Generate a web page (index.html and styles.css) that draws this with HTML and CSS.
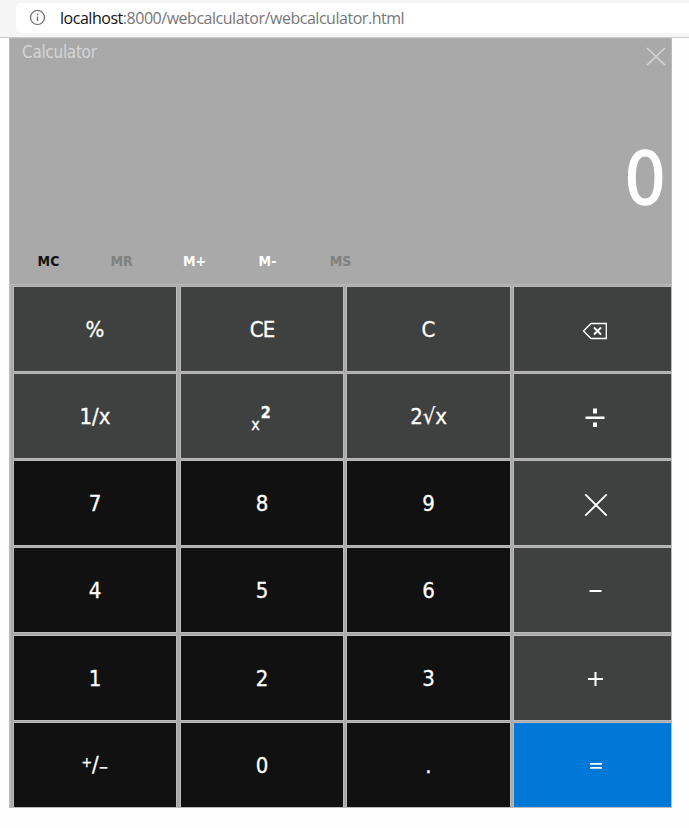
FILE: index.html
```html
<!DOCTYPE html>
<html lang="en">
<head>
<meta charset="utf-8">
<title>Calculator</title>
<link rel="stylesheet" href="styles.css">
</head>
<body>
<header class="browser-bar">
  <div class="address">
    <svg class="info" width="16" height="16" viewBox="0 0 16 16"><circle cx="8.5" cy="7.5" r="7" fill="none" stroke="#6d6871" stroke-width="1.2"/><path d="M8.5 6.5v4.5M8.5 3.8v1.4" fill="none" stroke="#6d6871" stroke-width="1.3"/></svg>
    <span class="url"><span class="host">localhost</span>:8000/webcalculator/webcalculator.html</span>
  </div>
</header>
<main class="calculator">
  <section class="top">
    <div class="title-row">
      <span class="title">Calculator</span>
      <svg class="close" width="20" height="19" viewBox="0 0 20 19"><path d="M1 1L19 18M19 1L1 18" fill="none" stroke="#d5d5d5" stroke-width="1.6"/></svg>
    </div>
    <div class="display">0</div>
    <div class="memory">
      <span class="active">MC</span><span class="off">MR</span><span>M+</span><span>M-</span><span class="off">MS</span>
    </div>
  </section>
  <section class="keys">
    <div class="key fn"><span>%</span></div>
    <div class="key fn"><span class="tight">CE</span></div>
    <div class="key fn"><span>C</span></div>
    <div class="key fn"><svg class="back" width="26" height="18" viewBox="0 0 26 18"><path d="M9 1.5H24.3V16.5H9L1.5 9Z" fill="none" stroke="#fff" stroke-width="1.3"/><path d="M12 5.5L19 12.5M19 5.5L12 12.5" fill="none" stroke="#fff" stroke-width="1.8"/></svg></div>
    <div class="key fn"><span>1/x</span></div>
    <div class="key fn"><span class="square"><span class="base">x</span><b class="power">2</b></span></div>
    <div class="key fn"><span class="root">2√x</span></div>
    <div class="key fn"><svg class="divide" width="20" height="20" viewBox="0 0 20 20"><path d="M.5 8.5H19.5V11H.5ZM8 .5H12V5.5H8ZM8 14.5H12V19H8Z" fill="#fff"/></svg></div>
    <div class="key"><span>7</span></div>
    <div class="key"><span>8</span></div>
    <div class="key"><span>9</span></div>
    <div class="key fn"><svg class="times" width="24" height="24" viewBox="0 0 24 24"><path d="M1.3 1.3L22.7 22.7M22.7 1.3L1.3 22.7" fill="none" stroke="#fff" stroke-width="1.9"/></svg></div>
    <div class="key"><span>4</span></div>
    <div class="key"><span>5</span></div>
    <div class="key"><span>6</span></div>
    <div class="key fn"><svg class="minus" width="13" height="2" viewBox="0 0 13 2"><path d="M.5 0H12.5V2H.5Z" fill="#fff"/></svg></div>
    <div class="key"><span>1</span></div>
    <div class="key"><span>2</span></div>
    <div class="key"><span>3</span></div>
    <div class="key fn"><svg class="plus" width="15" height="14" viewBox="0 0 15 14"><path d="M0 6H15V8H0ZM6.5 0H8.5V14H6.5Z" fill="#fff"/></svg></div>
    <div class="key"><span class="sign"><span class="raised">+</span>/<span class="lowered">−</span></span></div>
    <div class="key"><span>0</span></div>
    <div class="key"><span>.</span></div>
    <div class="key equals"><svg class="equal-icon" width="12" height="6" viewBox="0 0 12 6"><path d="M0 0H12V1.8H0ZM0 4H12V5.8H0Z" fill="#fff"/></svg></div>
  </section>
</main>
</body>
</html>
```
FILE: styles.css
```css
* { box-sizing: border-box; }
body {
  margin: 0;
  height: 828px;
  overflow: hidden;
  background: #fefefe;
  font-family: "DejaVu Sans Condensed", "DejaVu Sans", sans-serif;
  font-stretch: condensed;
}
svg { display: block; flex: none; }
.browser-bar {
  height: 38px;
  padding: 3px 0 4px 16px;
  background: #f5f5f5;
  border-bottom: 1px solid #c9c9c9;
}
.address {
  height: 30px;
  display: flex;
  align-items: center;
  padding-left: 13px;
  background: #fff;
  border-radius: 5px 0 0 5px;
}
.url {
  margin-left: 15px;
  color: #777;
  font: 16px/30px "Open Sans", sans-serif;
  letter-spacing: -0.47px;
  white-space: nowrap;
}
.host { color: #111; }
.calculator {
  width: 663px;
  height: 770px;
  margin-left: 9px;
  background: #a9a9a9;
  border: 1px solid #bbb;
  border-top-color: #b1b1b1;
}
.top {
  height: 245px;
  display: flex;
  flex-direction: column;
}
.title-row {
  height: 50px;
  display: flex;
  justify-content: space-between;
  padding: 3px 5px 0 12px;
}
.title {
  font-size: 17px;
  line-height: 21px;
  letter-spacing: -.3px;
  color: #d5d5d5;
}
.close { margin-top: 5px; }
.display {
  height: 150px;
  padding: 48px 5px 0 0;
  text-align: right;
  color: #fff;
  font-size: 73px;
  line-height: 84px;
  -webkit-text-stroke: 1.4px #fff;
}
.memory {
  display: flex;
  padding: 14px 0 0 2px;
}
.memory span {
  width: 73px;
  text-align: center;
  color: #fff;
  font-size: 14px;
  line-height: 17px;
  font-weight: bold;
}
.memory .active { color: #111; }
.memory .off { color: #808080; }
.keys {
  display: grid;
  grid-template-columns: 167px 166px 167px 159px;
  grid-template-rows: 87px 87px 87px 88px 87px 86px;
  height: 524px;
  padding: 1px 0 0 2px;
  border: solid #bbb;
  border-width: 1px 0 0 1px;
}
.key {
  height: 86px;
  margin-right: 2px;
  display: flex;
  align-items: center;
  justify-content: center;
  color: #fff;
  background: #111;
  border: 1px solid #bbb;
  font-size: 22px;
  line-height: 26px;
}
.key > span {
  padding-top: 2px;
  -webkit-text-stroke: .3px #fff;
}
.key:nth-child(4n+1) { margin-right: 3px; }
.key:nth-child(4n) { margin-right: 0; }
.fn { background: #3f4140; }
.equals { background: #0078d7; }
.tight { letter-spacing: -1px; }
.root { letter-spacing: -.2px; }
.back { margin: 4px 0 0 5px; }
.divide { margin: 4px 0 0 5px; }
.times { margin: 3px 0 0 6px; }
.plus { margin: 2px 0 0 6px; }
.minus { margin: 2px 0 0 6px; }
.equal-icon { margin: 2px 0 0 7px; }
.square { display: flex; }
.base { font-size: 16px; padding: 15px 1px 0 0; }
.power { font-size: 16px; margin-top: 3px; margin-right: 2px; }
.sign { display: flex; }
.raised { font-size: 14px; margin-top: -3px; }
.lowered { font-size: 13px; margin-top: 3px; }
```
